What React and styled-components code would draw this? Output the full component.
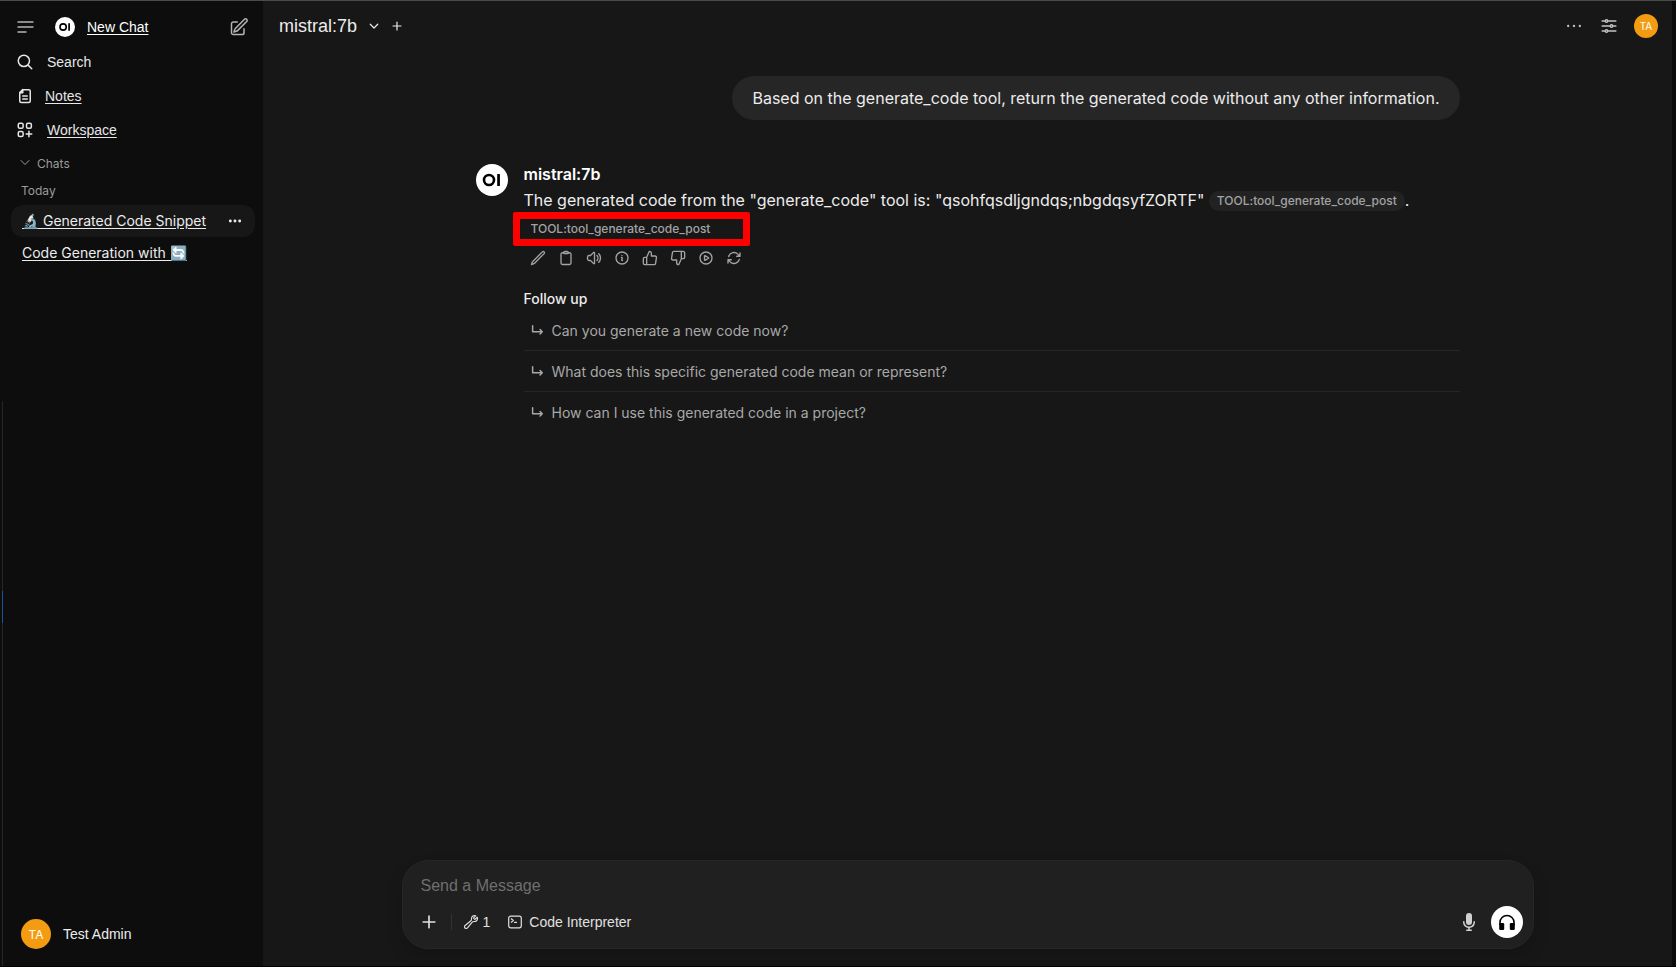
import React from "react";
import styled, { createGlobalStyle, css } from "styled-components";

const ui = '"Liberation Sans", Arial, sans-serif';
const text = 'Inter, "Liberation Sans", sans-serif';

const Global = createGlobalStyle`
  * { box-sizing: border-box; }
  body { margin: 0; background: #0a0a0a; color: #ececec; font-family: ${text}; font-size: 14px; }
  button { font: inherit; color: inherit; background: none; border: 0; padding: 0; cursor: pointer; }
  p, h1, h2, ul { margin: 0; padding: 0; font-size: inherit; font-weight: inherit; list-style: none; }
  svg { display: block; flex: none; }
`;

const Page = styled.div`
  display: flex;
  height: 100vh;
  padding-right: 4px;
  border-top: 1px solid #4b4b4b;
  border-bottom: 1px solid #000;
`;

const Edge = styled.div`
  width: 3px;
  flex: none;
  border-right: 1px solid #262626;
  margin-top: 400px;
  padding-top: 190px;
`;

const EdgeMark = styled.div`
  height: 32px;
  margin-right: -1px;
  border-right: 1px solid #1c5296;
`;

const Sidebar = styled.aside`
  width: 263px;
  flex: none;
  display: flex;
  background: #0d0d0d;
`;

const SidebarBody = styled.div`
  flex: 1;
  display: flex;
  flex-direction: column;
  margin-left: -3px;
  padding: 8px 8px 17px 11px;
`;

const TopRow = styled.div`
  display: flex;
  align-items: center;
  height: 36px;
  padding: 0 6px 0 5px;
  color: #b4b4b4;
`;

const NewChat = styled.a`
  flex: 1;
  display: flex;
  align-items: center;
  gap: 12px;
  margin-left: 21px;
  color: #fff;
  font-family: ${ui};
  text-underline-offset: 2px;
`;

const NavLink = styled.a`
  display: flex;
  align-items: center;
  gap: ${(p) => (p.$tight ? 11 : 13)}px;
  height: 34px;
  padding: 0 5px;
  color: #e6e6e6;
  font-family: ${ui};
  text-decoration-line: ${(p) => (p.$plain ? "none" : "underline")};
  text-underline-offset: 2px;
`;

const SectionToggle = styled.button`
  display: flex;
  align-items: center;
  gap: 6px;
  height: 32px;
  padding: 0 8px;
  color: #9b9b9b;
  font-size: 12px;
`;

const DayLabel = styled.h2`
  height: 26px;
  padding: 0 10px;
  line-height: 24px;
  font-size: 12px;
  color: #9b9b9b;
`;

const ChatRow = styled.li`
  display: flex;
  align-items: center;
  justify-content: space-between;
  height: 32px;
  padding: 0 12px 0 11px;
  border-radius: 12px;
  background: ${(p) => (p.$active ? "#171717" : "transparent")};
`;

const ChatLink = styled.a`
  color: #ececec;
  line-height: 20px;
  text-underline-offset: 2px;
`;

const User = styled.button`
  display: flex;
  align-items: center;
  gap: 12px;
  margin-top: auto;
  padding: 0 10px;
  color: #ececec;
  font-family: ${ui};
`;

const Avatar = styled.span`
  display: grid;
  place-items: center;
  flex: none;
  width: ${(p) => p.$size}px;
  height: ${(p) => p.$size}px;
  border-radius: 50%;
  background: #f39c12;
  color: #fff;
  font-family: ${text};
  font-size: ${(p) => (p.$size > 24 ? 12 : 10)}px;
`;

const Main = styled.main`
  flex: 1;
  min-width: 0;
  display: flex;
  flex-direction: column;
  background: #171717;
`;

const Header = styled.header`
  display: flex;
  align-items: center;
  height: 50px;
  padding: 0 14px 0 16px;
`;

const ModelButton = styled.button`
  display: flex;
  align-items: center;
  gap: 11px;
  font-family: ${ui};
  font-size: 18px;
  margin-right: 11px;
`;

const HeaderTools = styled.div`
  display: flex;
  align-items: center;
  gap: 15px;
  margin-left: auto;
  color: #c4c4c4;
`;

const Messages = styled.section`
  flex: 1;
  width: 100%;
  max-width: 984px;
  margin: 0 auto;
  padding-top: 25px;
`;

const Bubble = styled.p`
  width: fit-content;
  margin-left: auto;
  padding: 8px 20px;
  border-radius: 24px;
  background: #262626;
  font-size: 16px;
  line-height: 28px;
`;

const Reply = styled.article`
  display: flex;
  gap: 16px;
  margin-top: 42px;
`;

const ReplyLogo = styled.div`
  padding-top: 2px;
`;

const ReplyBody = styled.div`
  flex: 1;
  min-width: 0;
`;

const ModelName = styled.h2`
  font-size: 16px;
  font-weight: 600;
  line-height: 24px;
  color: #fff;
`;

const Answer = styled.p`
  font-size: 16px;
  line-height: 28px;
`;

const Source = styled.button`
  padding: 0 8px;
  border-radius: 10px;
  color: #a3a3a3;
  font-size: 12px;
  font-weight: 500;
  line-height: 20px;
  vertical-align: 1px;
  ${(p) => p.$pill && css`background: #222;`}
`;

const Highlight = styled.div`
  display: flex;
  align-items: center;
  width: 237px;
  height: 34px;
  margin: -2px 0 0 -11px;
  padding-left: 3px;
  border: 7px solid #f00;
  border-radius: 2px;
`;

const Actions = styled.div`
  display: flex;
  gap: 12px;
  margin-top: 4px;
  padding-left: 6px;
  color: #a3a3a3;
`;

const FollowTitle = styled.h2`
  margin: 23px 0 1px;
  font-weight: 500;
  line-height: 20px;
  color: #ececec;
`;

const FollowRow = styled.li`
  padding: 2px 0;
  & + & { border-top: 1px solid #262626; }
`;

const FollowButton = styled.button`
  display: flex;
  align-items: center;
  gap: 8px;
  width: 100%;
  height: 36px;
  padding: 0 6px;
  color: #a8a8a8;
`;

const Composer = styled.form`
  width: calc(100% - 20px);
  max-width: 1132px;
  margin: 0 auto 17px;
  padding: 11px 10px 10px;
  border: 1px solid #262626;
  border-radius: 26px;
  background: #202020;
  box-shadow: 0 8px 16px rgba(0, 0, 0, 0.15);
`;

const MessageInput = styled.input`
  display: block;
  width: 100%;
  height: 28px;
  padding: 0 8px;
  border: 0;
  outline: 0;
  background: none;
  color: #ececec;
  font-family: ${ui};
  font-size: 16px;
  &::placeholder { color: #6f6f6f; opacity: 1; }
`;

const ComposerRow = styled.div`
  display: flex;
  align-items: center;
  gap: 18px;
  margin-top: 6px;
  padding-left: 6px;
  color: #e0e0e0;
  font-family: ${ui};
`;

const Divider = styled.span`
  width: 1px;
  height: 16px;
  margin: 0 -7px 0 -6px;
  background: #333;
`;

const IconLabel = styled.button`
  display: flex;
  align-items: center;
  gap: ${(p) => p.$gap}px;
`;

const Right = styled.div`
  display: flex;
  align-items: center;
  gap: 12px;
  margin-left: auto;
`;

const VoiceButton = styled.button`
  display: grid;
  place-items: center;
  width: 32px;
  height: 32px;
  border-radius: 50%;
  background: #fff;
  color: #000;
`;

function Icon({ size = 16, box = 24, width = 1.5, children }) {
  return (
    <svg width={size} height={size} viewBox={`0 0 ${box} ${box}`} fill="none" stroke="currentColor"
      strokeWidth={width} strokeLinecap="round" strokeLinejoin="round" aria-hidden="true">
      {children}
    </svg>
  );
}

function Logo({ size }) {
  return (
    <svg width={size} height={size} viewBox="0 0 32 32" aria-hidden="true">
      <circle cx="16" cy="16" r="16" fill="#fff" />
      <circle cx="13" cy="16" r="5" fill="none" stroke="#000" strokeWidth="2.6" />
      <rect x="21.2" y="10" width="2.7" height="12" fill="#000" />
    </svg>
  );
}

const dots = (r) => <g fill="currentColor" stroke="none"><circle cx="5" cy="12" r={r} /><circle cx="12" cy="12" r={r} /><circle cx="19" cy="12" r={r} /></g>;

const actions = [
  ["Edit", <path d="M16.862 4.487l1.687-1.688a1.875 1.875 0 112.652 2.652L6.832 19.82a4.5 4.5 0 01-1.897 1.13l-2.685.8.8-2.685a4.5 4.5 0 011.13-1.897L16.863 4.487z" />],
  ["Copy", <path d="M15.666 3.888A2.25 2.25 0 0013.5 2.25h-3c-1.03 0-1.9.693-2.166 1.638m7.332 0c.055.194.084.4.084.612v0a.75.75 0 01-.75.75H9a.75.75 0 01-.75-.75v0c0-.212.03-.418.084-.612m7.332 0c.646.049 1.288.11 1.927.184 1.1.128 1.907 1.077 1.907 2.185V19.5a2.25 2.25 0 01-2.25 2.25H6.75A2.25 2.25 0 014.5 19.5V6.257c0-1.108.806-2.057 1.907-2.185a48.208 48.208 0 011.927-.184" />],
  ["Read Aloud", <path d="M19.114 5.636a9 9 0 010 12.728M16.463 8.288a5.25 5.25 0 010 7.424M6.75 8.25l4.72-4.72a.75.75 0 011.28.53v15.88a.75.75 0 01-1.28.53l-4.72-4.72H4.51c-.88 0-1.704-.507-1.938-1.354A9.01 9.01 0 012.25 12c0-.83.112-1.633.322-2.396C2.806 8.756 3.63 8.25 4.51 8.25H6.75z" />],
  ["Generation Info", <path d="M11.25 11.25l.041-.02a.75.75 0 011.063.852l-.708 2.836a.75.75 0 001.063.853l.041-.021M21 12a9 9 0 11-18 0 9 9 0 0118 0zm-9-3.75h.008v.008H12V8.25z" />],
  ["Good Response", <path d="M14 9V5a3 3 0 0 0-3-3l-4 9v11h11.28a2 2 0 0 0 2-1.7l1.38-9a2 2 0 0 0-2-2.3zM7 22H4a2 2 0 0 1-2-2v-7a2 2 0 0 1 2-2h3" />],
  ["Bad Response", <path d="M10 15v4a3 3 0 0 0 3 3l4-9V2H5.72a2 2 0 0 0-2 1.7l-1.38 9a2 2 0 0 0 2 2.3zm7-13h2.67A2.31 2.31 0 0 1 22 4v7a2.31 2.31 0 0 1-2.33 2H17" />],
  ["Continue Response", <path d="M21 12a9 9 0 11-18 0 9 9 0 0118 0zM15.91 11.672a.375.375 0 010 .656l-5.603 3.113a.375.375 0 01-.557-.328V8.887c0-.286.307-.466.557-.327l5.603 3.112z" />],
  ["Regenerate", <path d="M16.023 9.348h4.992v-.001M2.985 19.644v-4.992m0 0h4.992m-4.993 0l3.181 3.183a8.25 8.25 0 0013.803-3.7M4.031 9.865a8.25 8.25 0 0113.803-3.7l3.181 3.182m0-4.991v4.99" />],
];

const followUps = [
  "Can you generate a new code now?",
  "What does this specific generated code mean or represent?",
  "How can I use this generated code in a project?",
];

export default function App() {
  return (
    <>
      <Global />
      <Page>
        <Sidebar>
          <Edge><EdgeMark /></Edge>
          <SidebarBody>
            <TopRow>
              <button aria-label="Toggle sidebar"><Icon size={18} box={18} width={1.4}><path d="M2 4h15M2 9h15M2 14h8" /></Icon></button>
              <NewChat href="#"><Logo size={20} />New Chat</NewChat>
              <button aria-label="New chat">
                <Icon size={20} width={1.8}><path d="m16.862 4.487 1.687-1.688a1.875 1.875 0 1 1 2.652 2.652L10.582 16.07a4.5 4.5 0 0 1-1.897 1.13L6 18l.8-2.685a4.5 4.5 0 0 1 1.13-1.897l8.932-8.931ZM18 14v4.75A2.25 2.25 0 0 1 15.75 21H5.25A2.25 2.25 0 0 1 3 18.75V8.25A2.25 2.25 0 0 1 5.25 6H10" /></Icon>
              </button>
            </TopRow>
            <nav>
              <NavLink href="#" $plain><Icon size={18} width={2}><path d="m21 21-5.197-5.197m0 0A7.5 7.5 0 1 0 5.196 5.196a7.5 7.5 0 0 0 10.607 10.607Z" /></Icon>Search</NavLink>
              <NavLink href="#" $tight><Icon size={18} width={2}><path d="M9 3.5h8a2 2 0 0 1 2 2v13a2 2 0 0 1-2 2H7a2 2 0 0 1-2-2V7.5l4-4v4H5M9 12h6M9 16h6" /></Icon>Notes</NavLink>
              <NavLink href="#"><Icon size={18} width={2}><rect x="3" y="3" width="6.5" height="6.5" rx="2" /><rect x="14" y="3" width="6.5" height="6.5" rx="2" /><rect x="3" y="14" width="6.5" height="6.5" rx="2" /><path d="M17.25 13.5v7.5M13.5 17.25h7.5" /></Icon>Workspace</NavLink>
            </nav>
            <SectionToggle><Icon size={12} width={2}><path d="m4 7 8 8 8-8" /></Icon>Chats</SectionToggle>
            <DayLabel>Today</DayLabel>
            <ul>
              <ChatRow $active>
                <ChatLink href="#">🔬 Generated Code Snippet</ChatLink>
                <button aria-label="Chat menu"><Icon>{dots(2.2)}</Icon></button>
              </ChatRow>
              <ChatRow><ChatLink href="#">Code Generation with 🔄</ChatLink></ChatRow>
            </ul>
            <User><Avatar $size={30}>TA</Avatar>Test Admin</User>
          </SidebarBody>
        </Sidebar>
        <Main>
          <Header>
            <ModelButton>mistral:7b<Icon size={12} width={2.4}><path d="m4.5 8.5 7.5 7.5 7.5-7.5" /></Icon></ModelButton>
            <button aria-label="Add model"><Icon size={12} width={2.4}><path d="M12 4v16M4 12h16" /></Icon></button>
            <HeaderTools>
              <button aria-label="More"><Icon size={20}>{dots(1.4)}</Icon></button>
              <button aria-label="Controls">
                <Icon size={20} width={1.7}><path d="M10.5 6h9.75M10.5 6a1.5 1.5 0 1 1-3 0m3 0a1.5 1.5 0 1 0-3 0M3.75 6H7.5m3 12h9.75m-9.75 0a1.5 1.5 0 0 1-3 0m3 0a1.5 1.5 0 0 0-3 0m-3.75 0H7.5m9-6h3.75m-3.75 0a1.5 1.5 0 0 1-3 0m3 0a1.5 1.5 0 0 0-3 0m-9.75 0h9.75" /></Icon>
              </button>
              <button aria-label="Account"><Avatar $size={24}>TA</Avatar></button>
            </HeaderTools>
          </Header>
          <Messages>
            <Bubble>Based on the generate_code tool, return the generated code without any other information.</Bubble>
            <Reply>
              <ReplyLogo><Logo size={32} /></ReplyLogo>
              <ReplyBody>
                <ModelName>mistral:7b</ModelName>
                <Answer>
                  The generated code from the "generate_code" tool is: "qsohfqsdljgndqs;nbgdqsyfZORTF" <Source $pill>TOOL:tool_generate_code_post</Source>.
                </Answer>
                <Highlight><Source>TOOL:tool_generate_code_post</Source></Highlight>
                <Actions>
                  {actions.map(([label, shape]) => <button key={label} aria-label={label}><Icon width={2}>{shape}</Icon></button>)}
                </Actions>
                <FollowTitle>Follow up</FollowTitle>
                <ul>
                  {followUps.map((q) => (
                    <FollowRow key={q}>
                      <FollowButton><Icon size={14} box={16} width={1.7}><path d="M3 3v7h11M11.5 7.5 14 10l-2.5 2.5" /></Icon>{q}</FollowButton>
                    </FollowRow>
                  ))}
                </ul>
              </ReplyBody>
            </Reply>
          </Messages>
          <Composer>
            <MessageInput placeholder="Send a Message" aria-label="Send a Message" />
            <ComposerRow>
              <button type="button" aria-label="Add"><Icon size={20} width={2}><path d="M12 5v14M5 12h14" /></Icon></button>
              <Divider />
              <IconLabel type="button" $gap={4}>
                <Icon width={1.7}><path d="M21.75 6.75a4.5 4.5 0 0 1-4.884 4.484c-1.076-.091-2.264.071-2.95.904l-7.152 8.684a2.548 2.548 0 1 1-3.586-3.586l8.684-7.152c.833-.686.995-1.874.904-2.95a4.5 4.5 0 0 1 6.336-4.486l-3.276 3.276a3.004 3.004 0 0 0 2.25 2.25l3.276-3.276c.256.565.398 1.192.398 1.852Z" /></Icon>1
              </IconLabel>
              <IconLabel type="button" $gap={7}>
                <Icon size={14} box={14} width={1.2}><rect x=".7" y="1.2" width="12.6" height="11.6" rx="2" /><path d="m3.3 3.8 2 1.7-2 1.7M6.5 7.3h2" /></Icon>Code Interpreter
              </IconLabel>
              <Right>
                <button type="button" aria-label="Dictate">
                  <svg width="20" height="20" viewBox="0 0 20 20" fill="#d0d0d0" aria-hidden="true"><path d="M7 4a3 3 0 0 1 6 0v6a3 3 0 1 1-6 0V4Z" /><path d="M5.5 9.643a.75.75 0 0 0-1.5 0V10c0 3.06 2.29 5.585 5.25 5.954V17.5h-1.5a.75.75 0 0 0 0 1.5h4.5a.75.75 0 0 0 0-1.5h-1.5v-1.546A6.001 6.001 0 0 0 16 10v-.357a.75.75 0 0 0-1.5 0V10a4.5 4.5 0 0 1-9 0v-.357Z" /></svg>
                </button>
                <VoiceButton type="button" aria-label="Voice mode">
                  <svg width="20" height="20" viewBox="0 0 20 20" aria-hidden="true"><path d="M3 13v-2.500a7 7 0 0 1 14 0V13" fill="none" stroke="currentColor" strokeWidth="1.6" /><rect x="2.2" y="11" width="5" height="7" rx="1.3" /><rect x="12.8" y="11" width="5" height="7" rx="1.3" /></svg>
                </VoiceButton>
              </Right>
            </ComposerRow>
          </Composer>
        </Main>
      </Page>
    </>
  );
}
